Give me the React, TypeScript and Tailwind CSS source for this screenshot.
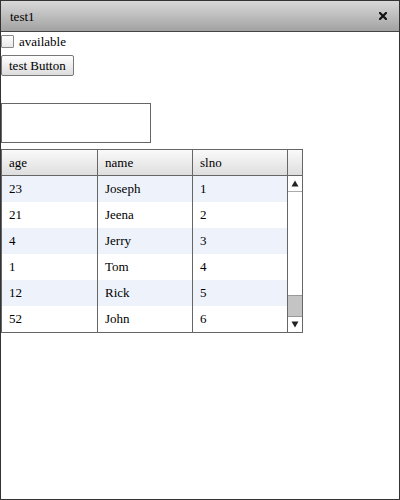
const ROWS = [
  { age: "23", name: "Joseph", slno: "1" },
  { age: "21", name: "Jeena", slno: "2" },
  { age: "4", name: "Jerry", slno: "3" },
  { age: "1", name: "Tom", slno: "4" },
  { age: "12", name: "Rick", slno: "5" },
  { age: "52", name: "John", slno: "6" },
];

const serif = "font-['Liberation_Serif',serif]";

export default function App() {
  return (
    <div className={`w-[400px] h-[500px] border border-[#333] bg-white flex flex-col text-black ${serif}`}>
      {/* title bar */}
      <div className="h-[31px] shrink-0 flex items-center justify-between pl-[9px] pr-[12px] border-b border-[#444] bg-gradient-to-b from-[#d9d9d9] to-[#a2a2a2]">
        <span className="text-[13px] leading-none">test1</span>
        <svg width="8" height="8" viewBox="0 0 8 8">
          <path d="M1 1l6 6M7 1l-6 6" stroke="#111" strokeWidth="2.2" strokeLinecap="square" />
        </svg>
      </div>

      <div className="flex flex-col items-start">
        {/* checkbox row */}
        <label className="flex items-center gap-[5px] mt-[2px] h-[14px]">
          <span className="w-[13px] h-[13px] border border-[#888] bg-gradient-to-b from-white to-[#e8e8e8] rounded-[1px]" />
          <span className="text-[13px] leading-none">available</span>
        </label>

        {/* button */}
        <button className="mt-[7px] h-[21px] px-[7px] border border-[#777] rounded-[2px] bg-gradient-to-b from-white to-[#dcdcdc] text-[13px] leading-none">
          test Button
        </button>

        {/* input area */}
        <div className="mt-[27px] w-[150px] h-[40px] border border-[#666] bg-white" />

        {/* grid */}
        <div className="mt-[6px] w-[302px] border border-[#666] text-[13px]">
          <div className="flex h-[26px] border-b border-[#666] bg-gradient-to-b from-[#fafafa] to-[#dedede]">
            <div className="w-[96px] border-r border-[#666] flex items-center pl-[7px]">age</div>
            <div className="w-[95px] border-r border-[#666] flex items-center pl-[7px]">name</div>
            <div className="w-[95px] border-r border-[#666] flex items-center pl-[7px]">slno</div>
            <div className="flex-1" />
          </div>
          <div className="flex">
            <div className="flex flex-col w-[286px]">
              {ROWS.map((r, i) => (
                <div key={r.slno} className={`flex h-[26px] ${i % 2 === 0 ? "bg-[#eef3fb]" : "bg-white"}`}>
                  <div className="w-[96px] border-r border-[#666] flex items-center pl-[7px]">{r.age}</div>
                  <div className="w-[95px] border-r border-[#666] flex items-center pl-[7px]">{r.name}</div>
                  <div className="w-[95px] border-r border-[#666] flex items-center pl-[7px]">{r.slno}</div>
                </div>
              ))}
            </div>
            {/* scrollbar */}
            <div className="flex-1 flex flex-col bg-white">
              <div className="h-[16px] border-b border-[#aaa] flex items-center justify-center">
                <svg width="8" height="7" viewBox="0 0 8 7"><path d="M4 0.5L7.5 6.5H0.5Z" fill="#222" /></svg>
              </div>
              <div className="flex-1 flex flex-col justify-end">
                <div className="h-[22px] bg-[#c4c4c4] border-y border-[#999]" />
              </div>
              <div className="h-[15px] flex items-center justify-center">
                <svg width="8" height="7" viewBox="0 0 8 7"><path d="M0.5 0.5H7.5L4 6.5Z" fill="#222" /></svg>
              </div>
            </div>
          </div>
        </div>
      </div>
    </div>
  );
}
